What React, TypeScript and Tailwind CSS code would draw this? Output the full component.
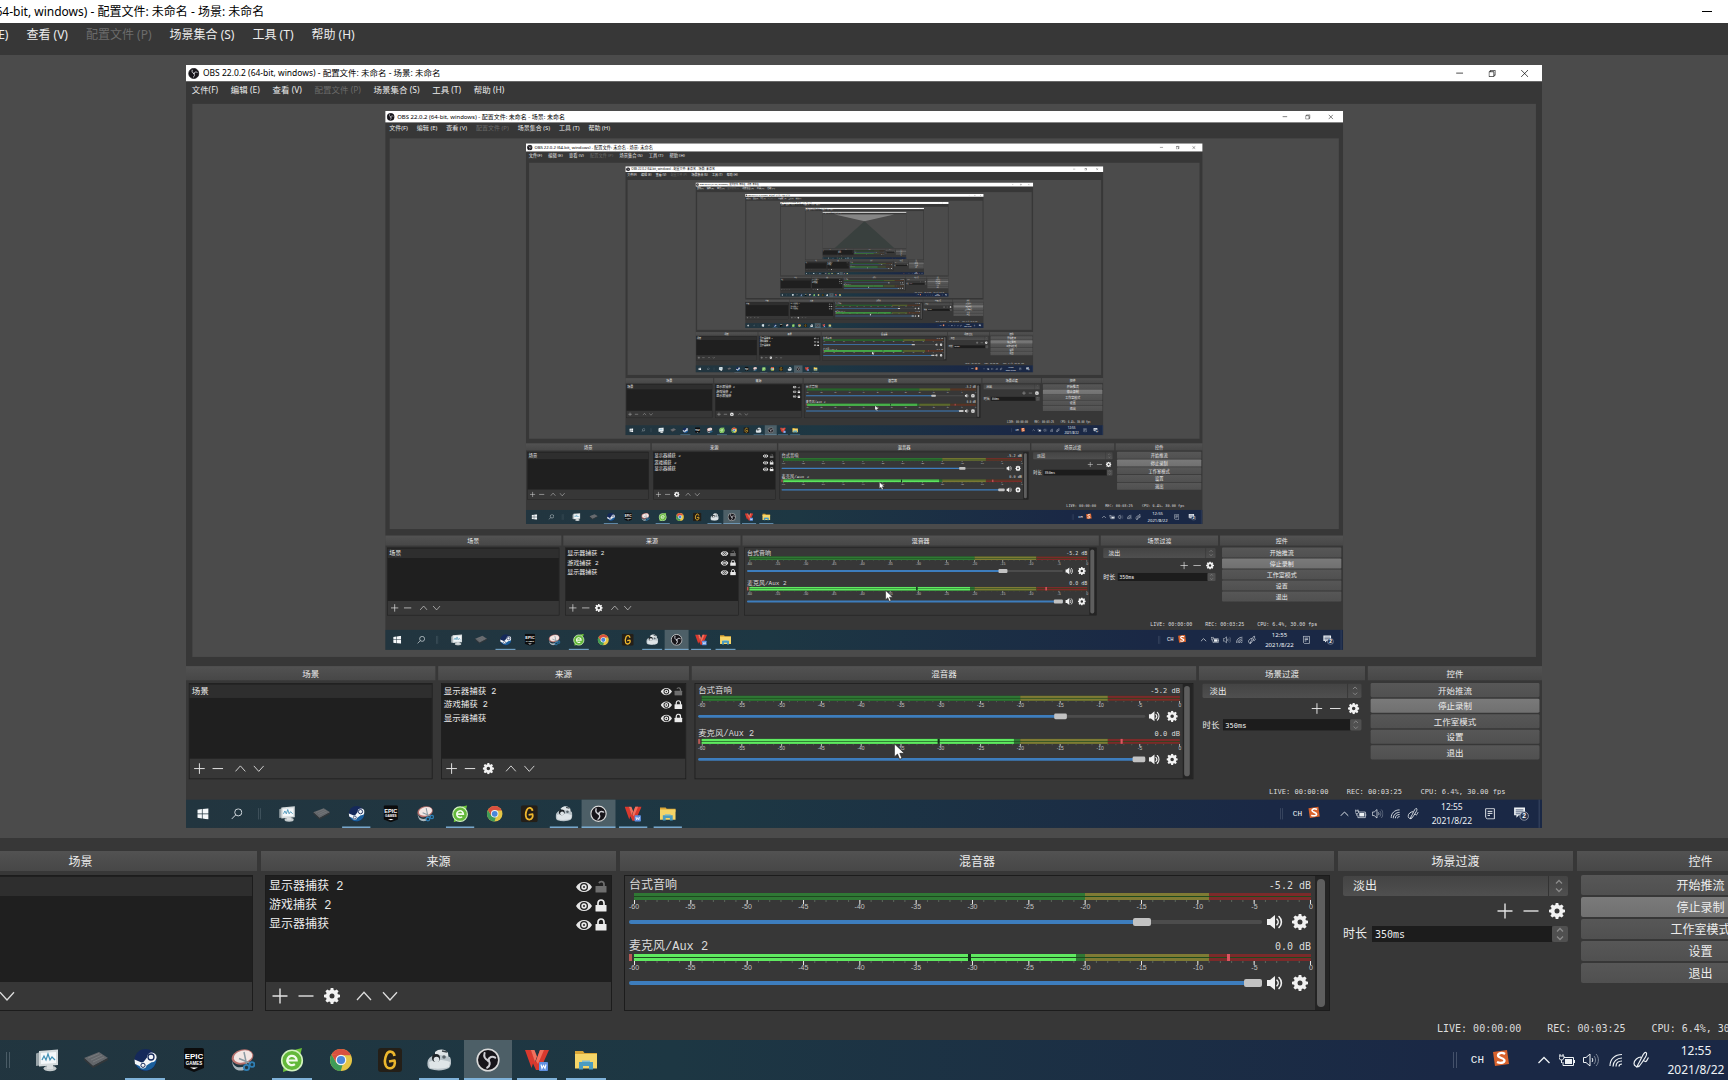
import { useId, type ReactNode } from "react";

const NESTED_LEVELS = 9;

/* ---------- OBS glyphs ---------- */

function PlusGlyph() {
  return (
    <svg viewBox="0 0 16 16" className="size-4" fill="none" stroke="#e2e2e2" strokeWidth="1.4" aria-hidden="true">
      <path d="M8 .5v15M.5 8h15" />
    </svg>
  );
}

function MinusGlyph() {
  return (
    <svg viewBox="0 0 16 16" className="size-4" fill="none" stroke="#e2e2e2" strokeWidth="1.4" aria-hidden="true">
      <path d="M.5 8h15" />
    </svg>
  );
}

function UpGlyph() {
  return (
    <svg viewBox="0 0 16 16" className="size-4" fill="none" stroke="#dcdcdc" strokeWidth="1.3" aria-hidden="true">
      <path d="M1 12 8 4.2 15 12" />
    </svg>
  );
}

function DownGlyph() {
  return (
    <svg viewBox="0 0 16 16" className="size-4" fill="none" stroke="#dcdcdc" strokeWidth="1.3" aria-hidden="true">
      <path d="M1 4.2 8 12l7-7.8" />
    </svg>
  );
}

function GearGlyph() {
  return (
    <svg viewBox="0 0 16 16" className="size-4" fill="#f2f2f2" aria-hidden="true">
      <path
        fillRule="evenodd"
        d="M6.7 0h2.6l.4 2.1 1.2.5 1.8-1.2 1.9 1.9-1.2 1.8.5 1.2 2.1.4v2.6l-2.1.4-.5 1.2 1.2 1.8-1.9 1.9-1.8-1.2-1.2.5-.4 2.1H6.7l-.4-2.1-1.2-.5-1.8 1.2-1.9-1.9 1.2-1.8-.5-1.2L0 9.3V6.7l2.1-.4.5-1.2-1.2-1.8 1.9-1.9 1.8 1.2 1.2-.5zM8 5.5a2.5 2.5 0 1 0 0 5 2.5 2.5 0 0 0 0-5z"
      />
    </svg>
  );
}

function SpeakerGlyph() {
  return (
    <svg viewBox="0 0 16 16" className="size-4" aria-hidden="true">
      <path d="M0 5h3l5-4v14l-5-4H0z" fill="#f2f2f2" />
      <path d="M10 5.2c1.5 1.5 1.5 4.1 0 5.6M12 2.5c3.2 3 3.2 8 0 11" fill="none" stroke="#f2f2f2" strokeWidth="1.6" strokeLinecap="round" />
    </svg>
  );
}

function EyeGlyph() {
  return (
    <svg viewBox="0 0 16 12" className="h-3 w-4" aria-hidden="true">
      <path fillRule="evenodd" fill="#e6e6e6" d="M0 6C2 2.6 4.7.9 8 .9S14 2.6 16 6c-2 3.4-4.7 5.1-8 5.100S2 9.4 0 6zm8-4a4 4 0 1 0 0 8 4 4 0 0 0 0-8z" />
      <circle cx="8" cy="6" r="2.7" fill="#e6e6e6" />
      <circle cx="8" cy="6" r="1" fill="#1f1f1f" />
    </svg>
  );
}

function LockGlyph({ open = false }: { open?: boolean }) {
  const tone = open ? "#6e6e6e" : "#ececec";
  return (
    <svg viewBox="0 0 12 13" className="h-[13px] w-3" aria-hidden="true">
      <rect x=".5" y="6" width="11" height="6.5" rx=".6" fill={tone} />
      <path d={open ? "M4 3.2a2.6 2.6 0 0 1 5 .9V6.5" : "M3 6.5V4a3 3 0 0 1 6 0v2.5"} fill="none" stroke={tone} strokeWidth="1.7" />
    </svg>
  );
}

function SpinArrows() {
  return (
    <svg viewBox="0 0 8 14" className="h-3.5 w-2" fill="none" stroke="#8a8a8a" strokeWidth="1.3" aria-hidden="true">
      <path d="m1 4.500 3-3 3 3M1 9.500l3 3 3-3" />
    </svg>
  );
}

function ObsMark({ ring }: { ring: string }) {
  return (
    <svg viewBox="0 0 24 24" className="size-full" aria-hidden="true">
      <circle cx="12" cy="12" r="10.800" fill="#17151a" stroke={ring} strokeWidth="1.6" />
      <g fill="none" stroke="#cfcfd4" strokeWidth="2" strokeLinecap="round">
        <path d="M12.200 12.200C9 11.300 7.400 8.600 8.600 5" />
        <path d="M12.200 12.200c.9-3.200 4-4.600 7-2.600" />
        <path d="M12.200 12.200c2.300 2.400 2 5.600-1 7.500" />
      </g>
      <circle cx="12.200" cy="12.200" r="1.5" fill="#cfcfd4" />
    </svg>
  );
}

/* ---------- Window chrome ---------- */

function TitleBar() {
  return (
    <header className="flex h-[23px] items-center bg-white pl-[3px] text-xs text-black">
      <span className="size-4">
        <ObsMark ring="#17151a" />
      </span>
      <h1 className="ml-[5px] whitespace-nowrap">OBS 22.0.2 (64-bit, windows) - 配置文件: 未命名 - 场景: 未命名</h1>
      <div className="ml-auto flex h-full pr-0.5">
        <button type="button" aria-label="最小化" className="grid w-[46px] place-items-center">
          <svg viewBox="0 0 10 10" className="size-2.5" stroke="#000" strokeWidth="1" aria-hidden="true">
            <path d="M0 4.500h10" />
          </svg>
        </button>
        <button type="button" aria-label="还原" className="grid w-[46px] place-items-center">
          <svg viewBox="0 0 10 10" className="size-2.5" fill="none" stroke="#000" strokeWidth="1" aria-hidden="true">
            <path d="M.5 2.500h7v7h-7zM2.500 2.500v-2h7v7h-2" />
          </svg>
        </button>
        <button type="button" aria-label="关闭" className="grid w-[46px] place-items-center">
          <svg viewBox="0 0 10 10" className="size-2.5" stroke="#000" strokeWidth="1" aria-hidden="true">
            <path d="m0 0 10 10M10 0 0 10" />
          </svg>
        </button>
      </div>
    </header>
  );
}

const menus = ["文件(F)", "编辑 (E)", "查看 (V)", "配置文件 (P)", "场景集合 (S)", "工具 (T)", "帮助 (H)"];

function MenuBar() {
  return (
    <nav className="flex h-8 items-start gap-0.5 pt-1 text-xs text-[#ececec]">
      {menus.map((menu) => (
        <button key={menu} type="button" disabled={menu.startsWith("配置")} className="px-2 leading-4 whitespace-nowrap disabled:text-[#6b6b6b]">
          {menu}
        </button>
      ))}
    </nav>
  );
}

/* ---------- Docks ---------- */

function Dock({ title, children }: { title: string; children: ReactNode }) {
  return (
    <section className="flex min-w-0 flex-col">
      <h2 className="h-5 bg-linear-to-b from-[#525252] to-[#474747] text-center text-xs leading-[22px] text-[#ececec]">{title}</h2>
      <div className="flex-1 p-1">{children}</div>
    </section>
  );
}

function IconButton({ label, children }: { label: string; children: ReactNode }) {
  return (
    <button type="button" aria-label={label} className="grid size-[22px] shrink-0 place-items-center">
      {children}
    </button>
  );
}

function ListFrame({ gear = false, children }: { gear?: boolean; children: ReactNode }) {
  return (
    <div className="flex h-[136px] flex-col border border-[#1c1c1c] bg-[#373737]">
      <ul className="flex-1 bg-[#1f1f1f] pt-px font-['Liberation_Mono','Noto_Sans_CJK_SC',monospace] text-xs text-[#ececec]">{children}</ul>
      <div className="flex h-7 items-center gap-1 pl-[3px]">
        <IconButton label="添加"><PlusGlyph /></IconButton>
        <IconButton label="移除"><MinusGlyph /></IconButton>
        {gear && <IconButton label="属性"><GearGlyph /></IconButton>}
        <span className="w-0.5" />
        <IconButton label="上移"><UpGlyph /></IconButton>
        <IconButton label="下移"><DownGlyph /></IconButton>
      </div>
    </div>
  );
}

const sources = [
  { name: "显示器捕获 2", locked: false },
  { name: "游戏捕获 2", locked: true },
  { name: "显示器捕获", locked: true },
];

function SourceList() {
  return (
    <ListFrame gear>
      {sources.map((source) => (
        <li key={source.name} className="flex h-[19px] items-center gap-[3px] pr-1 pl-[3px]">
          <span className="mr-auto">{source.name}</span>
          <button type="button" aria-label="可见性"><EyeGlyph /></button>
          <button type="button" aria-label="锁定"><LockGlyph open={!source.locked} /></button>
        </li>
      ))}
    </ListFrame>
  );
}

const scale = [-60, -55, -50, -45, -40, -35, -30, -25, -20, -15, -10, -5, 0];
const majorTicks = scale.map((_, i) => `M${i * 55 + 0.5} 0v4`).join("");
const minorTicks = Array.from({ length: 61 }, (_, i) => `M${i * 11 + 0.5} 0v2`).join("");

function MeterRow({ level }: { level: number }) {
  return (
    <div className="relative flex h-[3px]">
      <span className="flex-[40] bg-[#2f7834]" />
      <span className="flex-[11] bg-[#7f7b34]" />
      <span className="flex-[9] bg-[#7c2a2a]" />
      {level > 0 && <span className="absolute inset-y-0 left-0 bg-[#5fea60]" style={{ width: `${level}%` }} />}
    </div>
  );
}

type ChannelProps = { name: string; db: string; level: number; volume: number };

function Channel({ name, db, level, volume }: ChannelProps) {
  const id = useId();
  const track = `linear-gradient(to right, #3d7dbd ${volume}%, #4c4c4c ${volume}%)`;
  return (
    <div className="h-[61px] pt-[3px]">
      <div className="flex h-3.5 items-center justify-between font-['Liberation_Mono','Noto_Sans_CJK_SC',monospace] text-xs leading-[14px] text-[#dcdcdc]">
        <label htmlFor={id}>{name}</label>
        <output className="font-['DejaVu_Sans_Mono',monospace] text-[10px]">{db}</output>
      </div>
      <div className="relative ml-[5px] flex flex-col gap-px bg-[#1d4a1f]">
        <MeterRow level={level} />
        <MeterRow level={level} />
        {level > 0 && (
          <>
            <span className="absolute inset-y-0 -left-[5px] w-[3px] bg-[#b85a55]" />
            <span className="absolute inset-y-0 left-[49.4%] w-[3px] bg-[#12301a]" />
            <span className="absolute inset-y-0 left-[87.6%] w-[3px] bg-[#dc5560]" />
          </>
        )}
      </div>
      <svg viewBox="0 0 661 4" preserveAspectRatio="none" className="ml-[5px] h-1 w-[calc(100%-5px)]" fill="none" aria-hidden="true">
        <path d={minorTicks} stroke="#5b665b" />
        <path d={majorTicks} stroke="#e6e6e6" />
      </svg>
      <div className="ml-[5px] flex h-1.5 justify-between font-['Liberation_Sans',sans-serif] text-[7px] leading-[6px] text-[#c4c4c4]">
        {scale.map((mark) => (
          <span key={mark} className="flex w-0 justify-center">
            {mark}
          </span>
        ))}
      </div>
      <div className="flex h-6 items-center">
        <input
          id={id}
          type="range"
          min={0}
          max={100}
          defaultValue={volume}
          className="mr-[5px] h-1 min-w-0 flex-1 appearance-none rounded-full [&::-webkit-slider-thumb]:h-2 [&::-webkit-slider-thumb]:w-[18px] [&::-webkit-slider-thumb]:appearance-none [&::-webkit-slider-thumb]:rounded-xs [&::-webkit-slider-thumb]:bg-[#c2c2c2]"
          style={{ background: track }}
        />
        <button type="button" aria-label="静音" className="mr-[9px]"><SpeakerGlyph /></button>
        <button type="button" aria-label="音频设置" className="mr-[3px]"><GearGlyph /></button>
      </div>
    </div>
  );
}

function Mixer() {
  return (
    <div className="flex h-[136px] border border-[#1c1c1c] bg-[#373737]">
      <div className="min-w-0 flex-1 pr-1 pl-1">
        <Channel name="台式音响" db="-5.2 dB" level={0} volume={82} />
        <Channel name="麦克风/Aux 2" db="0.0 dB" level={65.3} volume={100} />
      </div>
      <div className="w-3.5 bg-[#242424] py-[3px] pl-0.5">
        <div className="h-full w-2 rounded-full bg-[#5e5e5e]" />
      </div>
    </div>
  );
}

function Transitions() {
  const id = useId();
  return (
    <div className="px-px pt-px">
      <div className="relative flex">
        <select aria-label="场景过渡" className="h-5 w-full appearance-none rounded-xs bg-linear-to-b from-[#444] to-[#4f4f4f] pl-2.5 text-xs text-[#ececec]">
          <option>淡出</option>
        </select>
        <span className="pointer-events-none absolute inset-y-0 right-0 grid w-5 place-items-center border-l border-[#333]">
          <SpinArrows />
        </span>
      </div>
      <div className="flex h-[30px] items-center justify-end gap-1">
        <IconButton label="添加过渡"><PlusGlyph /></IconButton>
        <IconButton label="移除过渡"><MinusGlyph /></IconButton>
        <IconButton label="过渡属性"><GearGlyph /></IconButton>
      </div>
      <div className="flex h-4 items-center">
        <label htmlFor={id} className="mr-[5px] shrink-0 text-xs leading-4 text-[#ececec]">时长</label>
        <input
          id={id}
          type="text"
          defaultValue="350ms"
          className="h-4 min-w-0 flex-1 bg-[#1c1c1c] pl-[3px] font-['DejaVu_Sans_Mono',monospace] text-[10px] text-[#ececec]"
        />
        <button type="button" aria-label="调整时长" className="grid h-4 w-4 place-items-center rounded-xs bg-[#505050]">
          <SpinArrows />
        </button>
      </div>
    </div>
  );
}

const controls = ["开始推流", "停止录制", "工作室模式", "设置", "退出"];

function Controls() {
  return (
    <div className="flex flex-col gap-0.5">
      {controls.map((label) => (
        <button
          key={label}
          type="button"
          aria-pressed={label === "停止录制"}
          className="h-5 rounded-xs bg-linear-to-b from-[#575757] to-[#505050] text-xs leading-[22px] text-[#ececec] aria-pressed:from-[#7a7a7a] aria-pressed:to-[#707070]"
        >
          {label}
        </button>
      ))}
    </div>
  );
}

function StatusBar() {
  return (
    <footer className="flex h-[25px] items-center justify-end gap-[26px] pt-0.5 pr-[52px] font-['DejaVu_Sans_Mono',monospace] text-[10px] whitespace-nowrap text-[#dcdcdc]">
      <span>LIVE: 00:00:00</span>
      <span>REC: 00:03:25</span>
      <span>CPU: 6.4%, 30.00 fps</span>
    </footer>
  );
}

/* ---------- Taskbar ---------- */

const taskApps: { name: string; running?: boolean; focused?: boolean; art: ReactNode }[] = [
  {
    name: "性能监视器",
    art: (
      <>
        <path d="M1 5.500 8 3v14l-7 1z" fill="#98a3a8" />
        <path d="M4 3 23 1.500V17L4 18.500z" fill="#d5dbdd" />
        <path d="M6 5 21 4v11L6 16z" fill="#f4f8fa" />
        <path d="m7 12 2-4 2 4 2-6 2 6 2-3 3 3" fill="none" stroke="#3f8fb4" strokeWidth="1.2" />
        <ellipse cx="15" cy="20.500" rx="6.500" ry="2.800" fill="#c3cacc" />
        <path d="M12 17h6v4h-6z" fill="#d7dcde" />
      </>
    ),
  },
  {
    name: "键盘",
    art: (
      <>
        <path d="m0 10 15-6 9 6-15 8z" fill="#63666a" />
        <path d="m0 10 9 8v2L0 12zM24 10 9 18v2l15-8z" fill="#33373a" />
        <path d="m4 10 11-4.500M7 12l11-5M9 14l11-5" stroke="#7b7f82" strokeWidth=".8" />
      </>
    ),
  },
  {
    name: "Steam",
    running: true,
    art: (
      <>
        <circle cx="12.500" cy="12" r="11" fill="#15295a" />
        <path d="M3 17a11 11 0 0 0 20.500-5L12 13z" fill="#1b5f9c" />
        <path d="m1.500 11.500 7 3a3.500 3.500 0 0 1 2-.5l3.500-4.500a4.800 4.800 0 1 1 4.500 4.700L13.500 17.500a3.600 3.600 0 0 1-7 .5L2 16z" fill="#f4f6f8" />
        <circle cx="18" cy="9" r="3" fill="#f4f6f8" stroke="#15295a" strokeWidth="1.3" />
        <circle cx="10" cy="17.300" r="2.100" fill="none" stroke="#15295a" />
      </>
    ),
  },
  {
    name: "Epic Games",
    art: (
      <>
        <path d="M2 2c0-1.200.8-2 2-2h16c1.200 0 2 .8 2 2v18L12 24 2 20z" fill="#0c0c0d" />
        <text x="12" y="11" textAnchor="middle" fontSize="8" fontWeight="700" fill="#fff" fontFamily="Liberation Sans, sans-serif">EPIC</text>
        <text x="12" y="17" textAnchor="middle" fontSize="4.500" fontWeight="700" fill="#fff" fontFamily="Liberation Sans, sans-serif">GAMES</text>
        <path d="M8 19.500h8l-4 1.800z" fill="#fff" />
      </>
    ),
  },
  {
    name: "截图工具",
    art: (
      <>
        <path d="M1 12c1 7 7 9 13 6l-1 4c-6 2-12-1-12-10z" fill="#a9b6bd" />
        <ellipse cx="11.500" cy="9" rx="11" ry="7.500" fill="#b8726e" transform="rotate(-14 11.500 9)" />
        <ellipse cx="12" cy="8.500" rx="9.500" ry="6" fill="#f2e6e4" transform="rotate(-14 12 8.500)" />
        <path d="m13 4 2.500 12M8 10.500l12 5" stroke="#8a9aa3" strokeWidth="1.5" />
        <circle cx="15.500" cy="19.500" r="2.600" fill="none" stroke="#2f7fb5" strokeWidth="1.8" />
        <circle cx="21" cy="16.500" r="2.400" fill="none" stroke="#2f7fb5" strokeWidth="1.8" />
      </>
    ),
  },
  {
    name: "360 浏览器",
    running: true,
    art: (
      <>
        <path d="m14 2 8-2-1.500 6zM3 24l1-8 5 6z" fill="#6cc23a" />
        <circle cx="12" cy="12.500" r="10.300" fill="#63b83a" stroke="#d3f2c0" strokeWidth="1.6" />
        <path d="M7.500 12.500h9.200a4.700 4.700 0 1 0-1.800 3.700" fill="none" stroke="#f2fbec" strokeWidth="2.2" />
      </>
    ),
  },
  {
    name: "Chrome",
    art: (
      <>
        <circle cx="12" cy="12" r="11" fill="#e5c646" />
        <path d="M2.500 6.500A11 11 0 0 1 21.900 7.200H12z" fill="#d9503f" />
        <path d="M2.500 6.500 7.500 15l6 2-1.700 6A11 11 0 0 1 2.500 6.500z" fill="#3f9c58" />
        <path d="M2.500 6.500 7 14l5-7z" fill="#d9503f" />
        <circle cx="12" cy="12" r="5.300" fill="#f3f5f7" />
        <circle cx="12" cy="12" r="4.100" fill="#4b86d8" />
      </>
    ),
  },
  {
    name: "G",
    art: (
      <>
        <rect width="24" height="24" rx="3" fill="#241f18" />
        <path d="M16.500 8C16 3 10.500 2 8.500 6.500 6.500 11 6 14 8 18c1.800 3.300 6.700 3 8.300-.5.900-2 .7-3.500.200-5L11 13.500" fill="none" stroke="#edb72d" strokeWidth="2.600" strokeLinejoin="round" />
      </>
    ),
  },
  {
    name: "相机",
    running: true,
    art: (
      <>
        <path d="M8 4c4-4 11-3 13 1l1 8-14 1z" fill="#dfe4e6" />
        <path d="M1 12c2-4 7-6 12-5l10 2c2 4 1 9-1 11-5 3-13 3-19 1-3-1-3-6-2-9z" fill="#b9c3c9" />
        <path d="M2 14c4-2 13-3 21 0l-1 5c-5 2-14 2-19 1z" fill="#dfe5e8" />
        <circle cx="9" cy="10" r="4" fill="#1d2226" />
        <circle cx="9.500" cy="11.500" r="2.800" fill="#dde3e6" />
        <circle cx="17" cy="9" r="1.800" fill="#5a646a" />
        <path d="m15 3 5 1" stroke="#3b4348" strokeWidth="1.5" />
      </>
    ),
  },
  { name: "OBS", focused: true, running: true, art: null },
  {
    name: "WPS",
    running: true,
    art: (
      <>
        <path d="M0 2h6l4.500 12L15 2h9l-9 20h-4L8 15.500 6.500 20z" fill="#d8392e" />
        <path d="m9.500 2 2.500 6.500L10 14 5.800 2zM15 2h4l-6 14-2-3z" fill="#f1705d" />
        <rect x="14" y="14" width="9" height="9" rx="1" fill="#5f8fe0" />
        <path d="m16 16.500 1 4 1.500-3 1.500 3 1-4" fill="none" stroke="#fff" strokeWidth="1.1" />
      </>
    ),
  },
  {
    name: "文件资源管理器",
    running: true,
    art: (
      <>
        <path d="M1 3h8l1.500 2H23v4H1z" fill="#d9a536" />
        <path d="M1 6h22v14.500H1z" fill="#f5d568" />
        <path d="M5 14h14v7.500h-4V18H9v3.500H5z" fill="#4b9cc0" />
        <path d="M8 12.500h8V14H8z" fill="#7fbcd4" />
      </>
    ),
  },
];

function Taskbar() {
  return (
    <div className="flex h-10 items-stretch bg-linear-to-r from-[#22353f] via-[#1d3743] via-40% to-[#1a2845] to-80% text-[#eef2f5]">
      <button type="button" aria-label="开始" className="grid w-12 place-items-center">
        <svg viewBox="0 0 16 16" className="size-4" fill="#f5f8fa" aria-hidden="true">
          <path d="M0 2.300 6.500 1.400v6.100H0zM7.500 1.200 16 0v7.500H7.500zM0 8.500h6.500v6.100L0 13.700zM7.500 8.500H16V16l-8.500-1.200z" />
        </svg>
      </button>
      <button type="button" aria-label="搜索" className="grid w-12 place-items-center">
        <svg viewBox="0 0 16 16" className="size-4" fill="none" stroke="#dde4e8" strokeWidth="1.3" aria-hidden="true">
          <circle cx="10" cy="6" r="5" />
          <path d="m6.500 9.500-6 6" />
        </svg>
      </button>
      <span className="mr-[13px] ml-1.5 h-4 w-1 self-center border-x border-[#4a5c66]" />
      <div className="flex gap-px">
        {taskApps.map((app) => (
          <button
            key={app.name}
            type="button"
            aria-label={app.name}
            className={app.focused ? "relative grid w-12 place-items-center bg-[#4d5f67]" : "relative grid w-12 place-items-center"}
          >
            {app.art ? (
              <svg viewBox="0 0 24 24" className="size-6" aria-hidden="true">
                {app.art}
              </svg>
            ) : (
              <span className="size-6">
                <ObsMark ring="#dadada" />
              </span>
            )}
            {app.running && <span className={app.focused ? "absolute inset-x-0 bottom-0 h-0.5 bg-[#7fb2d9]" : "absolute inset-x-1 bottom-0 h-0.5 bg-[#7fb2d9]"} />}
          </button>
        ))}
      </div>
      <div className="ml-auto flex items-center">
        <span className="mr-3.5 h-4 w-1 border-x border-[#44516a]" />
        <span className="mr-2 font-['Liberation_Mono',monospace] text-[11px]">CH</span>
        <svg viewBox="0 0 18 18" className="mr-7 mb-1 size-[18px]" aria-hidden="true">
          <path d="m1 3 14-2 2 14-14 2z" fill="#d9622c" />
          <path d="M13 5C10 3 6 4 6 6.500S12.500 9 12.500 11.500 8 14.500 5 13" fill="none" stroke="#fff" strokeWidth="2.3" />
        </svg>
        <svg viewBox="0 0 12 12" className="mr-[9px] size-3" fill="none" stroke="#eef2f5" strokeWidth="1.3" aria-hidden="true">
          <path d="m.500 9 5.500-5.500L11.500 9" />
        </svg>
        <svg viewBox="0 0 16 14" className="mr-2 h-3.5 w-4" aria-hidden="true">
          <path d="M5 4.500h9.500v8H4V9" fill="none" stroke="#eef2f5" />
          <path d="M6 6h7v5H6zM15 7h1v3h-1z" fill="#eef2f5" />
          <path d="M1 1v2M4 1v2M0 3h5v2L3.500 7h-2L0 5zM2.500 7v3" fill="none" stroke="#eef2f5" />
        </svg>
        <svg viewBox="0 0 16 16" className="mr-2.5 size-4" fill="none" stroke="#eef2f5" aria-hidden="true">
          <path d="M.500 5.500h2.500l4-3.500v12l-4-3.500H.500z" />
          <path d="M9 6c1 1.200 1 2.800 0 4" />
          <path d="M11 4c2 2.300 2 5.700 0 8M13 2c3.200 3.300 3.200 8.700 0 12" stroke="#7d8798" />
        </svg>
        <svg viewBox="0 0 14 14" className="mr-2.5 size-3.5" fill="none" stroke="#eef2f5" strokeWidth="1.2" aria-hidden="true">
          <path d="M1 13C1 6 6 1.500 13 1.500M4 13.500c0-5 4-8.500 9-8.500M7 13.500c0-3.500 2.500-5.500 6-5.500M10 13.500c0-1.500 1-2.500 3-2.500" />
        </svg>
        <svg viewBox="0 0 16 18" className="mr-4 h-[18px] w-4" fill="none" stroke="#eef2f5" strokeWidth="1.2" aria-hidden="true">
          <path d="M5 13.500C8 9 9.500 3 12 1.500c2-.5 2 2 .500 4.500C10.500 9.500 8 13 6 15.500l-2 .500zM8 6C5 6 1 9 1 12.500c0 2.500 3 4 5 2.500M10 10c1.500-1 2 1 3 .500s1.500-2.500 2.500-4" />
        </svg>
        <time className="w-[62px] text-center text-xs leading-[19px]">
          12:55
          <br />
          2021/8/22
        </time>
        <svg viewBox="0 0 12 14" className="ml-4 h-4 w-3.5" fill="none" stroke="#eef2f5" strokeWidth="1.2" aria-hidden="true">
          <path d="M.600.600h10.800v12.800H2.600l-2-2zM3 4h6M3 6.500h6M3 9h3" />
        </svg>
        <svg viewBox="0 0 20 18" className="ml-[26px] h-5 w-[22px]" aria-hidden="true">
          <path d="M1 1h14v10H7l-3 3v-3H1z" fill="#eef2f5" />
          <path d="M3 4h10M3 6.500h10M3 9h6" stroke="#26375a" />
          <circle cx="14" cy="12" r="5.500" fill="#26324d" stroke="#aab3c2" />
          <text x="14" y="15" textAnchor="middle" fontSize="8.500" fontWeight="700" fill="#fff" fontFamily="Liberation Sans, sans-serif">2</text>
        </svg>
        <span className="mr-1 ml-3.5 h-10 w-px bg-[#46546e]" />
      </div>
    </div>
  );
}

/* ---------- Desktop and its recursive capture ---------- */

function Pointer() {
  return (
    <svg viewBox="0 0 16 24" className="absolute top-[960px] left-[1002px] h-6 w-4" aria-hidden="true">
      <path d="M.8 1v18.500l4.400-4 3 7.300 3.300-1.400-3-7H15z" fill="#fff" stroke="#222" strokeWidth="1" />
    </svg>
  );
}

function Capture({ depth }: { depth: number }) {
  return (
    <div className="h-[763px] w-[1356px] shrink-0 overflow-hidden">
      <div className="relative flex h-[1080px] w-[1920px] origin-top-left scale-[0.7064]">
        <Desktop depth={depth} />
        <Pointer />
      </div>
    </div>
  );
}

/* Where the windows become smaller than a pixel, their title bars and docks merge into two wedges. */
function VanishingPoint() {
  return (
    <svg viewBox="0 0 1902 783" className="w-full" aria-hidden="true">
      <path d="M273 10h1356L951 166z" fill="#858585" />
      <path d="m951 166 678 607H273z" fill="#39403e" />
    </svg>
  );
}

function Desktop({ depth }: { depth: number }) {
  return (
    <div className="flex flex-1 flex-col bg-[#373737]">
      <TitleBar />
      <MenuBar />
      <main className="mx-[9px] flex flex-1 items-center justify-center overflow-hidden bg-[#4b4b4b]">
        {depth < NESTED_LEVELS ? <Capture depth={depth + 1} /> : <VanishingPoint />}
      </main>
      <div className="mt-[13px] grid h-[164px] grid-cols-[353fr_355fr_714fr_235fr_247fr] gap-1">
        <Dock title="场景">
          <ListFrame>
            <li className="flex h-[19px] items-center bg-[#2e2e2e] pl-[3px]">场景</li>
          </ListFrame>
        </Dock>
        <Dock title="来源">
          <SourceList />
        </Dock>
        <Dock title="混音器">
          <Mixer />
        </Dock>
        <Dock title="场景过渡">
          <Transitions />
        </Dock>
        <Dock title="控件">
          <Controls />
        </Dock>
      </div>
      <StatusBar />
      <Taskbar />
    </div>
  );
}

export default function App() {
  return (
    <div className="overflow-hidden bg-[#373737] font-['Noto_Sans','Noto_Sans_CJK_SC',sans-serif]">
      <div className="-mx-24 flex min-h-screen">
        <Desktop depth={0} />
      </div>
    </div>
  );
}
